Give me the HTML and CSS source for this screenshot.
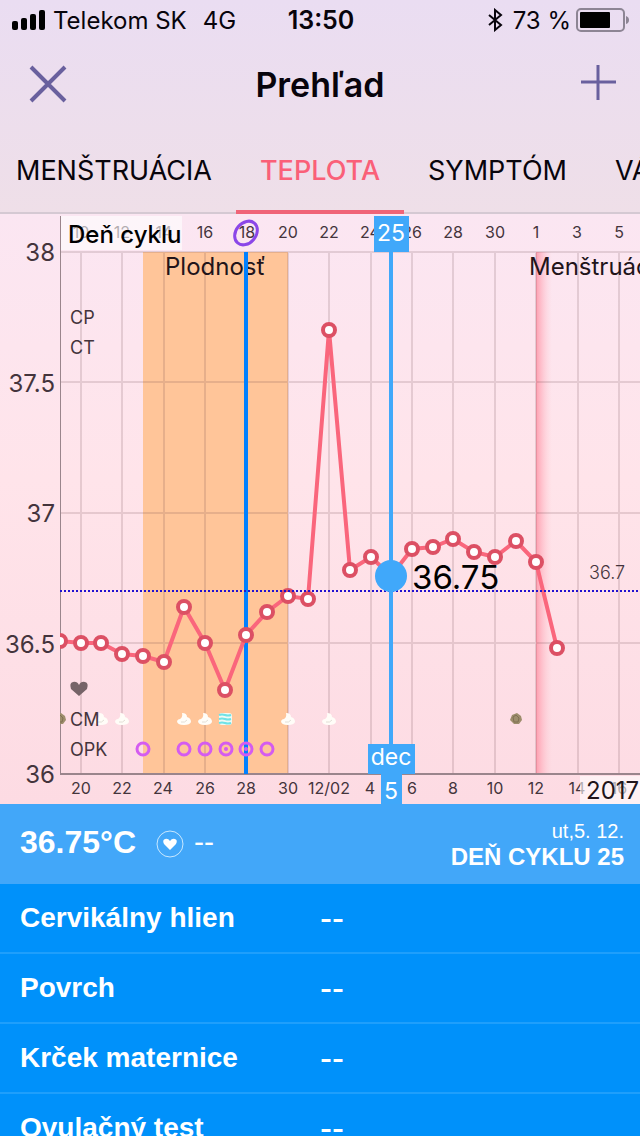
FILE: index.html
```html
<!DOCTYPE html>
<html lang="sk">
<head>
    <meta charset="UTF-8">
    <meta name="viewport" content="width=device-width, initial-scale=1.0">
    <title>Prehľad</title>
    <link rel="stylesheet" href="styles.css">
</head>
<body>
    <!-- Status bar -->
    <div class="status-bar">
        <div class="status-left">
            <svg class="signal" width="34" height="20" viewBox="0 0 34 20" aria-hidden="true">
                <rect x="0" y="11" width="6" height="9" rx="2"/>
                <rect x="9" y="8" width="6" height="12" rx="2"/>
                <rect x="18" y="4" width="6" height="16" rx="2"/>
                <rect x="27" y="0" width="6" height="20" rx="2"/>
            </svg>
            <span class="carrier">Telekom SK</span>
            <span>4G</span>
        </div>
        <div class="clock">13:50</div>
        <div class="status-right">
            <svg class="bluetooth" width="16" height="24" viewBox="0 0 16 24" aria-hidden="true">
                <path d="M2 7 L14 17 L8 22 V2 L14 7 L2 17"/>
            </svg>
            <span>73 %</span>
            <svg class="battery" width="54" height="24" viewBox="0 0 54 24" aria-hidden="true">
                <rect class="battery-case" x="1" y="1" width="47" height="22" rx="4"/>
                <rect x="4" y="4" width="30" height="16" rx="1"/>
                <path class="battery-tip" d="M50 8 Q53 9 53 12 Q53 15 50 16 Z"/>
            </svg>
        </div>
    </div>

    <!-- Title bar -->
    <header class="nav-bar">
        <button class="icon-button" type="button" aria-label="Zavrieť">
            <svg width="40" height="40" viewBox="0 0 40 40"><path class="close-mark" d="M3 3 L37 37 M37 3 L3 37"/></svg>
        </button>
        <h1>Prehľad</h1>
        <button class="icon-button" type="button" aria-label="Pridať">
            <svg width="40" height="40" viewBox="0 0 40 40"><path class="add-mark" d="M1 18 H36 M18 1 V36"/></svg>
        </button>
    </header>

    <!-- Tabs -->
    <nav class="tabs">
        <a href="#menstruacia">MENŠTRUÁCIA</a>
        <a class="active" href="#teplota" aria-current="page">TEPLOTA</a>
        <a href="#symptom">SYMPTÓM</a>
        <a href="#vaha">VÁHA</a>
    </nav>

    <main>
        <!-- Temperature chart -->
        <svg class="chart" viewBox="0 0 640 590" role="img" aria-label="Teplota">
            <defs>
                <linearGradient id="period">
                    <stop offset="0" stop-color="#ff8ca0" stop-opacity="0.8"/>
                    <stop offset="1" stop-color="#ffc8d0" stop-opacity="0"/>
                </linearGradient>
                <clipPath id="plot"><rect x="60" y="0" width="580" height="590"/></clipPath>
                <g id="cream">
                    <path d="M-2 -6 Q3 -6 3 -2 Q7 -1 7 3 Q6 6 0 6 Q-7 6 -7 2 Q-6 0 -4 0 Q-1 -2 -2 -6 Z" fill="#fffdf8"/>
                    <path d="M-3 3 Q1 4 3 1" fill="none" stroke="#e2ded6"/>
                </g>
                <g id="sticky">
                    <path d="M-4 -4 L1 -6 L5 -3 L6 1 L3 5 L-2 5 L-6 1 Z" fill="#9d8d6c"/>
                    <path d="M-3 -2 L0 -4 L3 -1 L2 3 L-2 3 Z" fill="none" stroke="#7f7052"/>
                </g>
                <g id="watery">
                    <rect x="-6" y="-6" width="13" height="12" rx="3" fill="#eefaf4"/>
                    <path d="M-6 -4 Q-3 -5 0 -4 T6 -4 M-6 0 Q-3 -1 0 0 T6 0 M-6 4 Q-3 3 0 4 T6 4" fill="none" stroke="#6fe2e6" stroke-width="2"/>
                </g>
            </defs>

            <rect class="fertile" x="143" y="38" width="145" height="522"/>
            <rect x="536" y="38" width="16" height="522" fill="url(#period)"/>

            <path class="grid" d="M60 38 H640 M60 168 H640 M60 299 H640 M60 429 H640
                M81 38 V560 M122 38 V560 M164 38 V560 M205 38 V560 M246 38 V560 M288 38 V560 M329 38 V560
                M371 38 V560 M412 38 V560 M453 38 V560 M495 38 V560 M536 38 V560 M578 38 V560 M619 38 V560"/>
            <rect class="axis" x="60" y="2" width="1" height="558"/>
            <rect class="axis" x="60" y="559" width="580" height="2"/>

            <g class="scale">
                <text x="55" y="47">38</text>
                <text x="55" y="178">37.5</text>
                <text x="55" y="308">37</text>
                <text x="55" y="439">36.5</text>
                <text x="55" y="569">36</text>
            </g>

            <g class="days">
                <text x="81" y="24">10</text>
                <text x="122" y="24">12</text>
                <text x="164" y="24">14</text>
                <text x="205" y="24">16</text>
                <text x="247" y="24">18</text>
                <text x="288" y="24">20</text>
                <text x="329" y="24">22</text>
                <text x="370" y="24">24</text>
                <text x="412" y="24">26</text>
                <text x="453" y="24">28</text>
                <text x="495" y="24">30</text>
                <text x="536" y="24">1</text>
                <text x="577" y="24">3</text>
                <text x="619" y="24">5</text>

                <text x="81" y="580">20</text>
                <text x="122" y="580">22</text>
                <text x="163" y="580">24</text>
                <text x="205" y="580">26</text>
                <text x="246" y="580">28</text>
                <text x="288" y="580">30</text>
                <text x="329" y="580">12/02</text>
                <text x="370" y="580">4</text>
                <text x="412" y="580">6</text>
                <text x="453" y="580">8</text>
                <text x="495" y="580">10</text>
                <text x="536" y="580">12</text>
                <text x="577" y="580">14</text>
                <text x="619" y="580">16</text>
            </g>
            <rect class="caption-back" x="61" y="2" width="121" height="34"/>
            <text class="caption" x="68" y="29">Deň cyklu</text>
            <rect class="caption-back" x="580" y="562" width="60" height="28"/>
            <text class="year" x="586" y="585">2017</text>

            <text class="phase" x="165" y="61">Plodnosť</text>
            <text class="phase" x="529" y="61">Menštruácia</text>

            <!-- Ovulation day -->
            <path class="ovulation-line" d="M246 38 V560"/>
            <ellipse class="ovulation-ring" cx="246" cy="19" rx="13" ry="10" transform="rotate(-50 246 19)"/>

            <!-- Temperatures -->
            <g clip-path="url(#plot)">
                <polyline class="temperature" points="60,427 81,429 101,429 122,440 143,442 164,448 184,393 205,429 225,476 246,421 267,398 288,382 308,385 329,116 350,356 371,343 391,362 412,335 433,333 453,325 474,338 495,343 516,327 536,348 557,434"/>
                <g class="points">
                    <circle cx="60" cy="427" r="6"/>
                    <circle cx="81" cy="429" r="6"/>
                    <circle cx="101" cy="429" r="6"/>
                    <circle cx="122" cy="440" r="6"/>
                    <circle cx="143" cy="442" r="6"/>
                    <circle cx="164" cy="448" r="6"/>
                    <circle cx="184" cy="393" r="6"/>
                    <circle cx="205" cy="429" r="6"/>
                    <circle cx="225" cy="476" r="6"/>
                    <circle cx="246" cy="421" r="6"/>
                    <circle cx="267" cy="398" r="6"/>
                    <circle cx="288" cy="382" r="6"/>
                    <circle cx="308" cy="385" r="6"/>
                    <circle cx="329" cy="116" r="6"/>
                    <circle cx="350" cy="356" r="6"/>
                    <circle cx="371" cy="343" r="6"/>
                    <circle cx="412" cy="335" r="6"/>
                    <circle cx="433" cy="333" r="6"/>
                    <circle cx="453" cy="325" r="6"/>
                    <circle cx="474" cy="338" r="6"/>
                    <circle cx="495" cy="343" r="6"/>
                    <circle cx="516" cy="327" r="6"/>
                    <circle cx="536" cy="348" r="6"/>
                    <circle cx="557" cy="434" r="6"/>
                </g>
                <use href="#sticky" x="60" y="505"/>
            </g>
            <path class="cover-line" d="M60 377 H640"/>
            <text class="cover-value" x="589" y="365">36.7</text>

            <!-- Cervical mucus -->
            <use href="#cream" x="101" y="505"/>
            <use href="#cream" x="122" y="505"/>
            <use href="#cream" x="184" y="505"/>
            <use href="#cream" x="205" y="505"/>
            <use href="#watery" x="225" y="505"/>
            <use href="#cream" x="288" y="505"/>
            <use href="#cream" x="329" y="505"/>
            <use href="#sticky" x="516" y="505"/>

            <!-- Ovulation tests -->
            <g class="opk">
                <circle cx="143" cy="535" r="6"/>
                <circle cx="184" cy="535" r="6"/>
                <circle cx="205" cy="535" r="6"/>
                <circle cx="226" cy="535" r="6"/>
                <circle cx="246" cy="535" r="6"/>
                <circle cx="267" cy="535" r="6"/>
                <circle class="peak" cx="226" cy="535" r="2"/>
                <circle class="peak" cx="246" cy="535" r="2"/>
            </g>

            <g class="legend">
                <text x="70" y="110">CP</text>
                <text x="70" y="140">CT</text>
                <path d="M79 482 L71 475 Q69 469 73 468 Q77 467 79 471 Q81 467 85 468 Q89 469 87 475 Z"/>
                <text x="70" y="512">CM</text>
                <text x="70" y="542">OPK</text>
            </g>

            <!-- Selected day -->
            <g class="selection">
                <path d="M391 30 V550"/>
                <rect x="374" y="2" width="35" height="36"/>
                <rect x="368" y="530" width="47" height="30"/>
                <rect x="381" y="560" width="21" height="30"/>
                <circle cx="391" cy="362" r="16"/>
                <text x="391" y="27">25</text>
                <text x="391" y="551">dec</text>
                <text x="391" y="585">5</text>
            </g>
            <text class="selected-value" x="412" y="375">36.75</text>
        </svg>

        <!-- Selected day details -->
        <section class="summary">
            <strong class="temp">36.75°C</strong>
            <svg class="heart" width="28" height="28" viewBox="0 0 28 28" aria-hidden="true">
                <circle cx="14" cy="14" r="13"/>
                <path d="M14 20 L8 14 Q6 10 9 9 Q12 8 14 11 Q16 8 19 9 Q22 10 20 14 Z"/>
            </svg>
            <span class="heart-value">--</span>
            <div class="summary-day">
                <span class="date">ut,5. 12.</span>
                <strong>DEŇ CYKLU 25</strong>
            </div>
        </section>

        <dl class="details">
            <div class="row"><dt>Cervikálny hlien</dt><dd>--</dd></div>
            <div class="row"><dt>Povrch</dt><dd>--</dd></div>
            <div class="row"><dt>Krček maternice</dt><dd>--</dd></div>
            <div class="row"><dt>Ovulačný test</dt><dd>--</dd></div>
        </dl>
    </main>
</body>
</html>
```
FILE: styles.css
```css
/* Base styles */
* {
    box-sizing: border-box;
}

html {
    background-color: #0091fa;
}

body {
    height: 100vh;
    margin: 0;
    overflow: hidden;
    font-family: Inter, sans-serif;
    color: #08040c;
    background: linear-gradient(#eaddf2, #efdfe8 214px, #efdfe8);
}

/* Status bar */
.status-bar {
    display: grid;
    grid-template-columns: 1fr auto 1fr;
    align-items: center;
    height: 40px;
    padding: 0 10px 0 12px;
    font-size: 24px;
}

.status-left,
.status-right {
    display: flex;
    align-items: center;
}

.status-right {
    justify-content: flex-end;
}

.carrier {
    margin: 0 16px 0 7px;
}

.clock {
    font-size: 25px;
    font-weight: 600;
}

.bluetooth {
    margin-right: 10px;
    fill: none;
    stroke: #08040c;
    stroke-width: 2;
}

.battery {
    margin-left: 5px;
}

.battery-case {
    fill: none;
    stroke: #8d8594;
    stroke-width: 2;
}

.battery-tip {
    fill: #8d8594;
}

/* Title bar */
.nav-bar {
    display: grid;
    grid-template-columns: 1fr auto 1fr;
    align-items: center;
    height: 88px;
    padding: 0 20px 0 28px;
}

.nav-bar {
    padding: 0 20px;
}

.nav-bar h1 {
    margin: 0;
    font-size: 34px;
    font-weight: 600;
}

.icon-button {
    width: 40px;
    height: 40px;
    padding: 0;
    border: none;
    background: none;
    cursor: pointer;
}

.icon-button:first-child {
    margin-left: 8px;
}

.icon-button:last-child {
    justify-self: end;
}

.icon-button path {
    fill: none;
    stroke: #69609e;
}

.close-mark {
    stroke-width: 4;
}

.add-mark {
    stroke-width: 3;
}

/* Tabs */
.tabs {
    display: flex;
    overflow: hidden;
    box-shadow: inset 0 -2px #d5c9d3;
}

.tabs a {
    flex: none;
    height: 86px;
    padding: 0 24px;
    border-bottom: 4px solid transparent;
    font-size: 27px;
    line-height: 86px;
    color: #08040c;
    text-decoration: none;
}

.tabs a:first-child {
    padding-left: 16px;
}

.tabs .active {
    border-color: #f06478;
    font-weight: 500;
    color: #fa6078;
}

/* Chart */
.chart {
    display: block;
    width: 100%;
    background: linear-gradient(#fbe6f2, #ffe4ea 45%, #fddbe3);
}

.fertile {
    fill: #ffc599;
}

.grid {
    fill: none;
    stroke: #643c46;
    stroke-opacity: 0.16;
    stroke-width: 2;
}

.axis {
    fill: #9a858c;
}

.scale {
    font-size: 24px;
    fill: #44343c;
    text-anchor: end;
}

.days {
    font-size: 16px;
    fill: #44343c;
    text-anchor: middle;
}

.caption-back {
    fill: #fff;
    fill-opacity: 0.6;
}

.caption {
    font-size: 24px;
    font-weight: 500;
}

.year,
.phase {
    font-size: 24px;
    fill: #22141a;
}

.ovulation-line {
    stroke: #0080ff;
    stroke-width: 4;
}

.ovulation-ring {
    fill: none;
    stroke: #8b46e8;
    stroke-width: 3;
}

.temperature {
    fill: none;
    stroke: #fa667c;
    stroke-width: 4;
}

.points circle {
    fill: #fff;
    stroke: #dc5064;
    stroke-width: 4;
}

.cover-line {
    stroke: #2010d0;
    stroke-width: 2;
    stroke-dasharray: 2 2;
}

.cover-value {
    font-size: 18px;
    font-weight: 300;
    fill: #44343c;
}

.opk circle {
    fill: none;
    stroke: #d45cf0;
    stroke-width: 3;
}

.opk .peak {
    fill: #d45cf0;
    stroke: none;
}

.legend {
    font-size: 18px;
    fill: #44343c;
}

.legend path {
    fill: #766468;
}

.selection {
    font-size: 23px;
    text-anchor: middle;
    fill: #40a8fa;
}

.selection path {
    stroke: #40a8fa;
    stroke-width: 4;
}

.selection text {
    fill: #fff;
}

.selected-value {
    font-size: 33px;
}

/* Day summary */
.summary {
    display: flex;
    align-items: center;
    height: 80px;
    padding: 0 16px 4px 20px;
    font-family: "Liberation Sans", Arial, sans-serif;
    color: #fff;
    background-color: #42a7f9;
}

.temp {
    font-size: 32px;
}

.heart {
    margin: 4px 10px 0 20px;
    fill: #fff;
}

.heart circle {
    fill: none;
    stroke: #c8e8ff;
}

.heart-value {
    font-size: 30px;
}

.summary-day {
    display: flex;
    flex-direction: column;
    margin-left: auto;
    padding-top: 4px;
    text-align: right;
    font-size: 24px;
    line-height: 26px;
}

.date {
    font-size: 20px;
}

/* Detail rows */
.details {
    margin: 0;
    font-family: "Liberation Sans", Arial, sans-serif;
    font-size: 28px;
    color: #fff;
    background-color: #0091fa;
}

.row {
    display: grid;
    grid-template-columns: 1fr 1fr;
    align-items: center;
    height: 70px;
    padding: 0 20px;
    border-bottom: 2px solid #1f9ffb;
}

.row dt {
    font-weight: bold;
}

.row dd {
    margin: 0;
    font-size: 36px;
}
```
